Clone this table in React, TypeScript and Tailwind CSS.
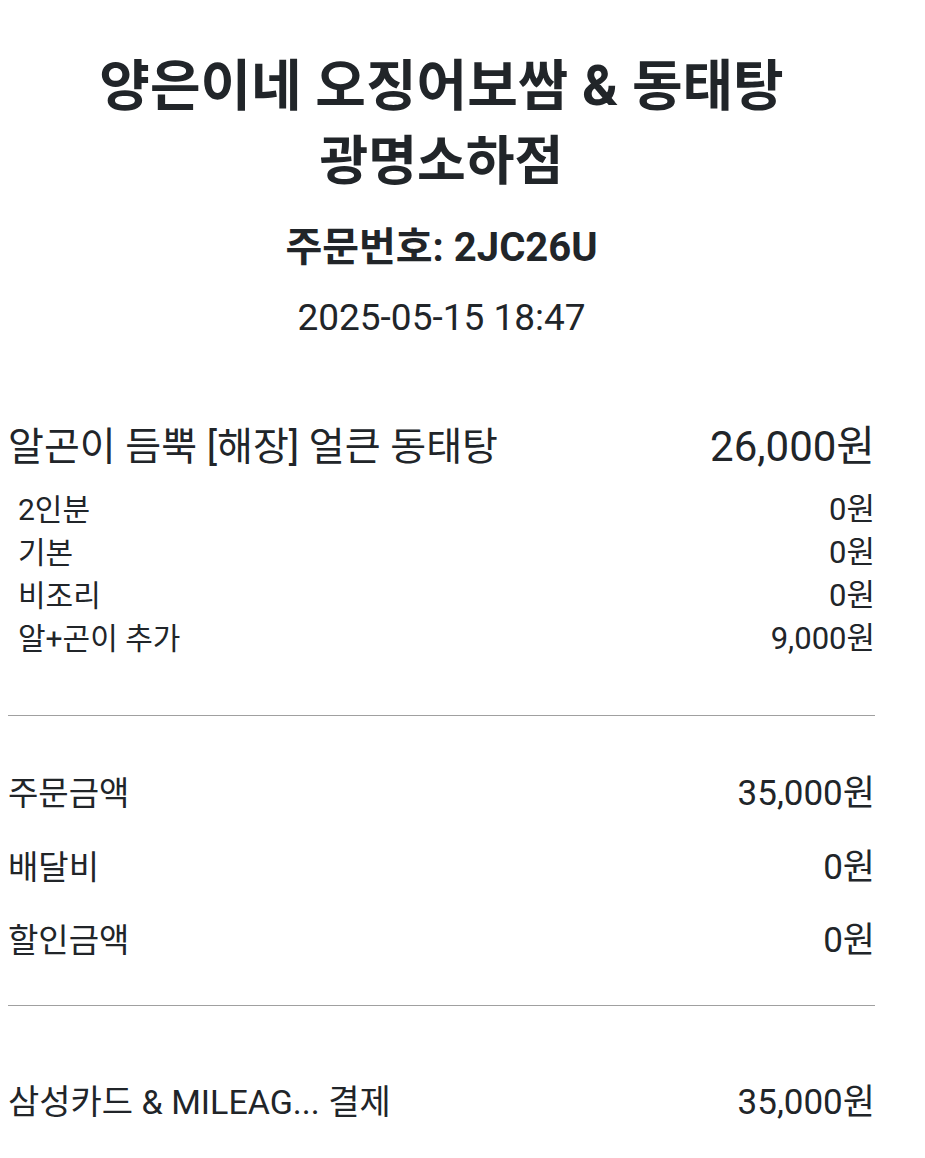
import React from 'react'

const font = "font-['Roboto','Noto_Sans_CJK_KR',sans-serif]"

const options = [
  { name: '2인분', price: '0원' },
  { name: '기본', price: '0원' },
  { name: '비조리', price: '0원' },
  { name: '알+곤이 추가', price: '9,000원' },
]

const totals = [
  { name: '주문금액', price: '35,000원' },
  { name: '배달비', price: '0원' },
  { name: '할인금액', price: '0원' },
]

function App() {
  return (
    <div className={`min-h-[1158px] w-[925px] bg-white text-[#212529] ${font}`}>
      <div className="pl-2 pr-[50px] pt-[48px]">
        {/* header */}
        <div className="flex flex-col items-center">
          <h1 className="flex flex-col items-center font-bold">
            <div className="text-[55px] leading-[76px]">양은이네 오징어보쌈 &amp; 동태탕</div>
            <div className="text-[53px] leading-[76px]">광명소하점</div>
          </h1>
          <div className="mt-[24px] text-[40px] font-bold leading-[48px]">
            주문번호: 2JC26U
          </div>
          <div className="mt-[22px] text-[37px] leading-[48px]">
            2025-05-15 18:47
          </div>
        </div>

        {/* menu item */}
        <div className="mt-[81px] flex items-center justify-between leading-[48px]">
          <span className="text-[39px]">알곤이 듬뿍 [해장] 얼큰 동태탕</span>
          <span className="text-[42px]">26,000원</span>
        </div>
        <div className="mt-[17px] flex flex-col pl-[10px]">
          {options.map((o) => (
            <div key={o.name} className="flex items-center justify-between leading-[43px]">
              <span className="text-[30px]">{o.name}</span>
              <span className="text-[31px]">{o.price}</span>
            </div>
          ))}
        </div>

        <div className="mt-[55px] h-px bg-[#a0a0a0]" />

        {/* totals */}
        <div className="mt-[41px] flex flex-col">
          {totals.map((t) => (
            <div key={t.name} className="flex items-center justify-between leading-[73.5px]">
              <span className="text-[33px]">{t.name}</span>
              <span className="text-[35px]">{t.price}</span>
            </div>
          ))}
        </div>

        <div className="mt-[27px] h-px bg-[#a0a0a0]" />

        <div className="mt-[60px] flex items-center justify-between leading-[73px]">
          <span className="text-[34px]">삼성카드 &amp; MILEAG... 결제</span>
          <span className="text-[35px]">35,000원</span>
        </div>
      </div>
    </div>
  )
}

export default App
